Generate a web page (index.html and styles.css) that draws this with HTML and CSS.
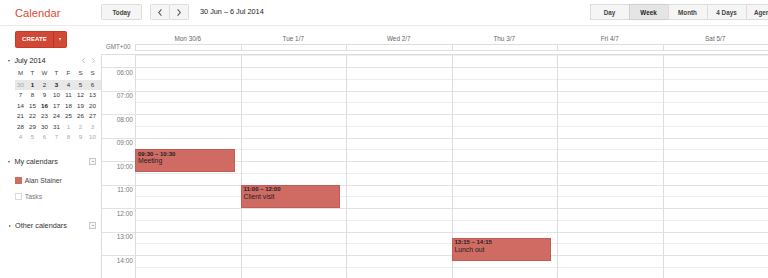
FILE: index.html
```html
<!DOCTYPE html>
<html lang="en">
<head>
<meta charset="utf-8">
<title>Calendar</title>
<link rel="stylesheet" href="styles.css">
</head>
<body>
<div class="app">
  <header class="topbar">
    <div class="logo">Calendar</div>
    <div class="btn today">Today</div>
    <div class="pager">
      <div class="btn pager-btn"><svg class="chev" viewBox="0 0 4 7" width="4" height="7"><path d="M3.4 0.4 L0.7 3.5 L3.4 6.6" fill="none" stroke="#555" stroke-width="1.1"/></svg></div>
      <div class="btn pager-btn"><svg class="chev" viewBox="0 0 4 7" width="4" height="7"><path d="M0.6 0.4 L3.3 3.5 L0.6 6.6" fill="none" stroke="#555" stroke-width="1.1"/></svg></div>
    </div>
    <div class="range">30 Jun – 6 Jul 2014</div>
    <div class="views">
      <div class="btn view">Day</div>
      <div class="btn view active">Week</div>
      <div class="btn view">Month</div>
      <div class="btn view">4 Days</div>
      <div class="btn view">Agenda</div>
    </div>
  </header>

  <div class="main-row">
    <aside class="sidebar">
      <div class="create">
        <span class="create-label">CREATE</span>
        <span class="create-menu"><span class="tri-down-white"></span></span>
      </div>

      <div class="month-head">
        <span class="tri-down"></span>
        <span class="month-name">July 2014</span>
        <span class="month-nav">
          <svg viewBox="0 0 3 5" width="3" height="5"><path d="M2.5 0.3 L0.6 2.5 L2.5 4.7" fill="none" stroke="#aaa" stroke-width="0.8"/></svg>
          <svg viewBox="0 0 3 5" width="3" height="5"><path d="M0.5 0.3 L2.4 2.5 L0.5 4.7" fill="none" stroke="#aaa" stroke-width="0.8"/></svg>
        </span>
      </div>

      <div class="minical">
        <div class="week head"><span>M</span><span>T</span><span>W</span><span>T</span><span>F</span><span>S</span><span>S</span></div>
        <div class="week current"><span class="other">30</span><span class="busy">1</span><span>2</span><span class="busy">3</span><span>4</span><span>5</span><span>6</span></div>
        <div class="week"><span>7</span><span>8</span><span>9</span><span>10</span><span>11</span><span>12</span><span>13</span></div>
        <div class="week"><span>14</span><span>15</span><span class="busy">16</span><span>17</span><span>18</span><span>19</span><span>20</span></div>
        <div class="week"><span>21</span><span>22</span><span>23</span><span>24</span><span>25</span><span>26</span><span>27</span></div>
        <div class="week"><span>28</span><span>29</span><span>30</span><span>31</span><span class="other">1</span><span class="other">2</span><span class="other">3</span></div>
        <div class="week"><span class="other">4</span><span class="other">5</span><span class="other">6</span><span class="other">7</span><span class="other">8</span><span class="other">9</span><span class="other">10</span></div>
      </div>

      <div class="section my-cals">
        <span class="tri-down"></span>
        <span class="section-name">My calendars</span>
        <span class="dd"><span class="dd-tri"></span></span>
      </div>
      <div class="cal-list">
        <div class="cal-item"><span class="swatch red"></span><span class="cal-name">Alan Stainer</span></div>
        <div class="cal-item"><span class="swatch empty"></span><span class="cal-name muted">Tasks</span></div>
      </div>

      <div class="section other-cals">
        <span class="tri-right"></span>
        <span class="section-name">Other calendars</span>
        <span class="dd"><span class="dd-tri"></span></span>
      </div>
    </aside>

    <main class="cal">
      <div class="cols dayheads">
        <div class="gutter"></div>
        <div class="dayhead">Mon 30/6</div>
        <div class="dayhead">Tue 1/7</div>
        <div class="dayhead">Wed 2/7</div>
        <div class="dayhead">Thu 3/7</div>
        <div class="dayhead">Fri 4/7</div>
        <div class="dayhead">Sat 5/7</div>
      </div>

      <div class="cols allday">
        <div class="tz">GMT+00</div>
        <div class="allday-cell"></div>
        <div class="allday-cell"></div>
        <div class="allday-cell"></div>
        <div class="allday-cell"></div>
        <div class="allday-cell"></div>
        <div class="allday-cell"></div>
      </div>

      <div class="cols grid">
        <div class="times">
          <div class="times-spacer"></div>
          <div class="hour">06:00</div>
          <div class="hour">07:00</div>
          <div class="hour">08:00</div>
          <div class="hour">09:00</div>
          <div class="hour">10:00</div>
          <div class="hour">11:00</div>
          <div class="hour">12:00</div>
          <div class="hour">13:00</div>
          <div class="hour">14:00</div>
        </div>
        <div class="day">
          <div class="event" style="top:94.45px;height:23px">
            <div class="ev-time">09:30 – 10:30</div>
            <div class="ev-title">Meeting</div>
          </div>
        </div>
        <div class="day">
          <div class="event" style="top:129.7px;height:23px">
            <div class="ev-time">11:00 – 12:00</div>
            <div class="ev-title">Client visit</div>
          </div>
        </div>
        <div class="day"></div>
        <div class="day">
          <div class="event" style="top:182.6px;height:23px">
            <div class="ev-time">13:15 – 14:15</div>
            <div class="ev-title">Lunch out</div>
          </div>
        </div>
        <div class="day"></div>
        <div class="day"></div>
      </div>
    </main>
  </div>
</div>
</body>
</html>
```

FILE: styles.css
```css
html, body {
  margin: 0;
  padding: 0;
  overflow: hidden;
  background: #fff;
}

body {
  font-family: "Liberation Sans", Arial, sans-serif;
  color: #222;
}

.app {
  width: 874px;
  height: 278px;
  display: flex;
  flex-direction: column;
}

/* ---------- top bar ---------- */
.topbar {
  height: 25px;
  flex-shrink: 0;
  border-bottom: 1px solid #ebebeb;
  display: flex;
  align-items: flex-start;
  padding-right: 88.5px;
}

.logo {
  width: 101px;
  box-sizing: border-box;
  padding-left: 15px;
  margin-top: 7.6px;
  font-size: 11.2px;
  line-height: 11.2px;
  color: #dd4b39;
}

.btn {
  height: 16px;
  box-sizing: border-box;
  border: 1px solid #dcdcdc;
  background: #f5f5f5;
  border-radius: 1.5px;
  font-size: 6.3px;
  font-weight: bold;
  color: #444;
  display: flex;
  align-items: center;
  justify-content: center;
}

.today {
  width: 41px;
  margin-top: 4px;
}

.pager {
  display: flex;
  margin-left: 8px;
  margin-top: 4px;
}

.pager-btn {
  width: 20px;
}

.pager-btn + .pager-btn {
  margin-left: -1px;
}

.chev {
  display: block;
}

.range {
  margin-left: 11px;
  margin-top: 8.3px;
  font-size: 7.3px;
  line-height: 8px;
  color: #222;
}

.views {
  display: flex;
  margin-left: auto;
  margin-top: 4px;
}

.view {
  width: 40px;
  border-radius: 0;
}

.view + .view {
  margin-left: -1px;
}

.view.active {
  background: #e5e5e5;
  border-color: #cfcfcf;
  color: #222;
}

/* ---------- layout ---------- */
.main-row {
  flex: 1;
  min-height: 0;
  display: flex;
}

/* ---------- sidebar ---------- */
.sidebar {
  width: 101px;
  flex-shrink: 0;
  box-sizing: border-box;
  padding-top: 5px;
}

.create {
  margin-left: 15px;
  width: 52px;
  height: 16.6px;
  box-sizing: border-box;
  display: flex;
  background: #d14836;
  border: 1px solid #c63a29;
  border-radius: 1.5px;
}

.create-label {
  flex: 1;
  display: flex;
  align-items: center;
  justify-content: center;
  color: #fff;
  font-size: 6px;
  font-weight: bold;
  letter-spacing: 0.1px;
}

.create-menu {
  width: 12px;
  border-left: 1px solid #b33626;
  display: flex;
  align-items: center;
  justify-content: center;
}

.tri-down-white {
  width: 0;
  height: 0;
  border-left: 1.7px solid transparent;
  border-right: 1.7px solid transparent;
  border-top: 3px solid #fff;
}

.tri-down {
  width: 0;
  height: 0;
  margin-left: 8.3px;
  margin-right: 4.1px;
  border-left: 1.3px solid transparent;
  border-right: 1.3px solid transparent;
  border-top: 2.2px solid #555;
}

.tri-right {
  width: 0;
  height: 0;
  margin-left: 8.6px;
  margin-right: 4.4px;
  border-top: 1.4px solid transparent;
  border-bottom: 1.4px solid transparent;
  border-left: 2px solid #555;
}

.month-head {
  display: flex;
  align-items: center;
  height: 10px;
  margin-top: 8.3px;
}

.month-name {
  font-size: 7.3px;
  line-height: 10px;
  color: #222;
}

.month-nav {
  margin-left: auto;
  margin-right: 6.5px;
  display: flex;
  gap: 6.5px;
}

.month-nav svg {
  display: block;
}

.minical {
  margin: 2.3px 0 0 14.5px;
  font-size: 6.2px;
  color: #333;
}

.week {
  display: grid;
  grid-template-columns: repeat(7, 12px);
  height: 10.5px;
  line-height: 10.5px;
  text-align: center;
}

.week.head {
  margin-bottom: 1px;
  color: #444;
}

.week.current {
  background: #e8e8e8;
}

.week .other {
  color: #aaa;
}

.week .busy {
  font-weight: bold;
  color: #222;
}

.section {
  display: flex;
  align-items: center;
  height: 10px;
}

.my-cals {
  margin-top: 14.2px;
}

.other-cals {
  margin-top: 15.3px;
}

.section-name {
  font-size: 7.3px;
  line-height: 10px;
  color: #333;
}

.dd {
  margin-left: auto;
  margin-right: 5px;
  width: 7px;
  height: 7px;
  box-sizing: border-box;
  border: 1px solid #c8c8c8;
  background: #f6f6f6;
  display: flex;
  align-items: center;
  justify-content: center;
}

.dd-tri {
  width: 0;
  height: 0;
  border-left: 1.2px solid transparent;
  border-right: 1.2px solid transparent;
  border-top: 1.8px solid #666;
}

.cal-list {
  margin-top: 5px;
}

.cal-item {
  display: flex;
  align-items: center;
  height: 16.7px;
}

.swatch {
  width: 7px;
  height: 7px;
  margin-left: 15.2px;
  box-sizing: border-box;
}

.swatch.red {
  background: #d06b64;
}

.swatch.empty {
  border: 1px solid #dadada;
  background: #fff;
}

.cal-name {
  margin-left: 2.6px;
  font-size: 6.8px;
  color: #444;
}

.cal-name.muted {
  color: #777;
}

/* ---------- calendar ---------- */
.cal {
  flex: 1;
  min-width: 0;
  min-height: 0;
  display: flex;
  flex-direction: column;
}

.cols {
  display: grid;
  grid-template-columns: 34px repeat(6, 105.5px);
}

.dayheads {
  height: 18px;
  flex-shrink: 0;
}

.dayhead {
  box-sizing: border-box;
  padding-top: 8.5px;
  text-align: center;
  font-size: 6.4px;
  line-height: 8px;
  color: #666;
}

.allday {
  height: 6.5px;
  flex-shrink: 0;
  margin-bottom: 3.5px;
}

.tz {
  text-align: right;
  padding-right: 4.5px;
  font-size: 6.3px;
  line-height: 6.5px;
  color: #777;
}

.allday-cell {
  box-sizing: border-box;
  border: 1px solid #dedede;
  border-right: none;
}

.grid {
  flex: 1;
  min-height: 0;
  overflow: hidden;
  border-top: 1px solid #dedede;
}

.times {
  box-sizing: border-box;
  border-left: 1px solid #dedede;
}

.times-spacer {
  height: 12.2px;
}

.hour {
  height: 23.5px;
  box-sizing: border-box;
  border-top: 1px solid #e2e2e2;
  padding: 0.5px 2px 0 0;
  text-align: right;
  font-size: 6.5px;
  line-height: 7px;
  color: #777;
}

.day {
  position: relative;
  border-left: 1px solid #dedede;
  background-image: repeating-linear-gradient(
    to bottom,
    #e2e2e2 12.2px, #e2e2e2 13.2px,
    transparent 13.2px, transparent 23.95px,
    #ededed 23.95px, #ededed 24.95px,
    transparent 24.95px, transparent 35.7px
  );
}

.event {
  position: absolute;
  left: -1px;
  right: 6px;
  box-sizing: border-box;
  background: #d06b64;
  border: 1px solid #c45c55;
  padding: 0.5px 0 0 2px;
  color: #222;
  overflow: hidden;
}

.ev-time {
  font-size: 6px;
  font-weight: bold;
  line-height: 6.5px;
}

.ev-title {
  font-size: 6.8px;
  line-height: 7px;
}
```
